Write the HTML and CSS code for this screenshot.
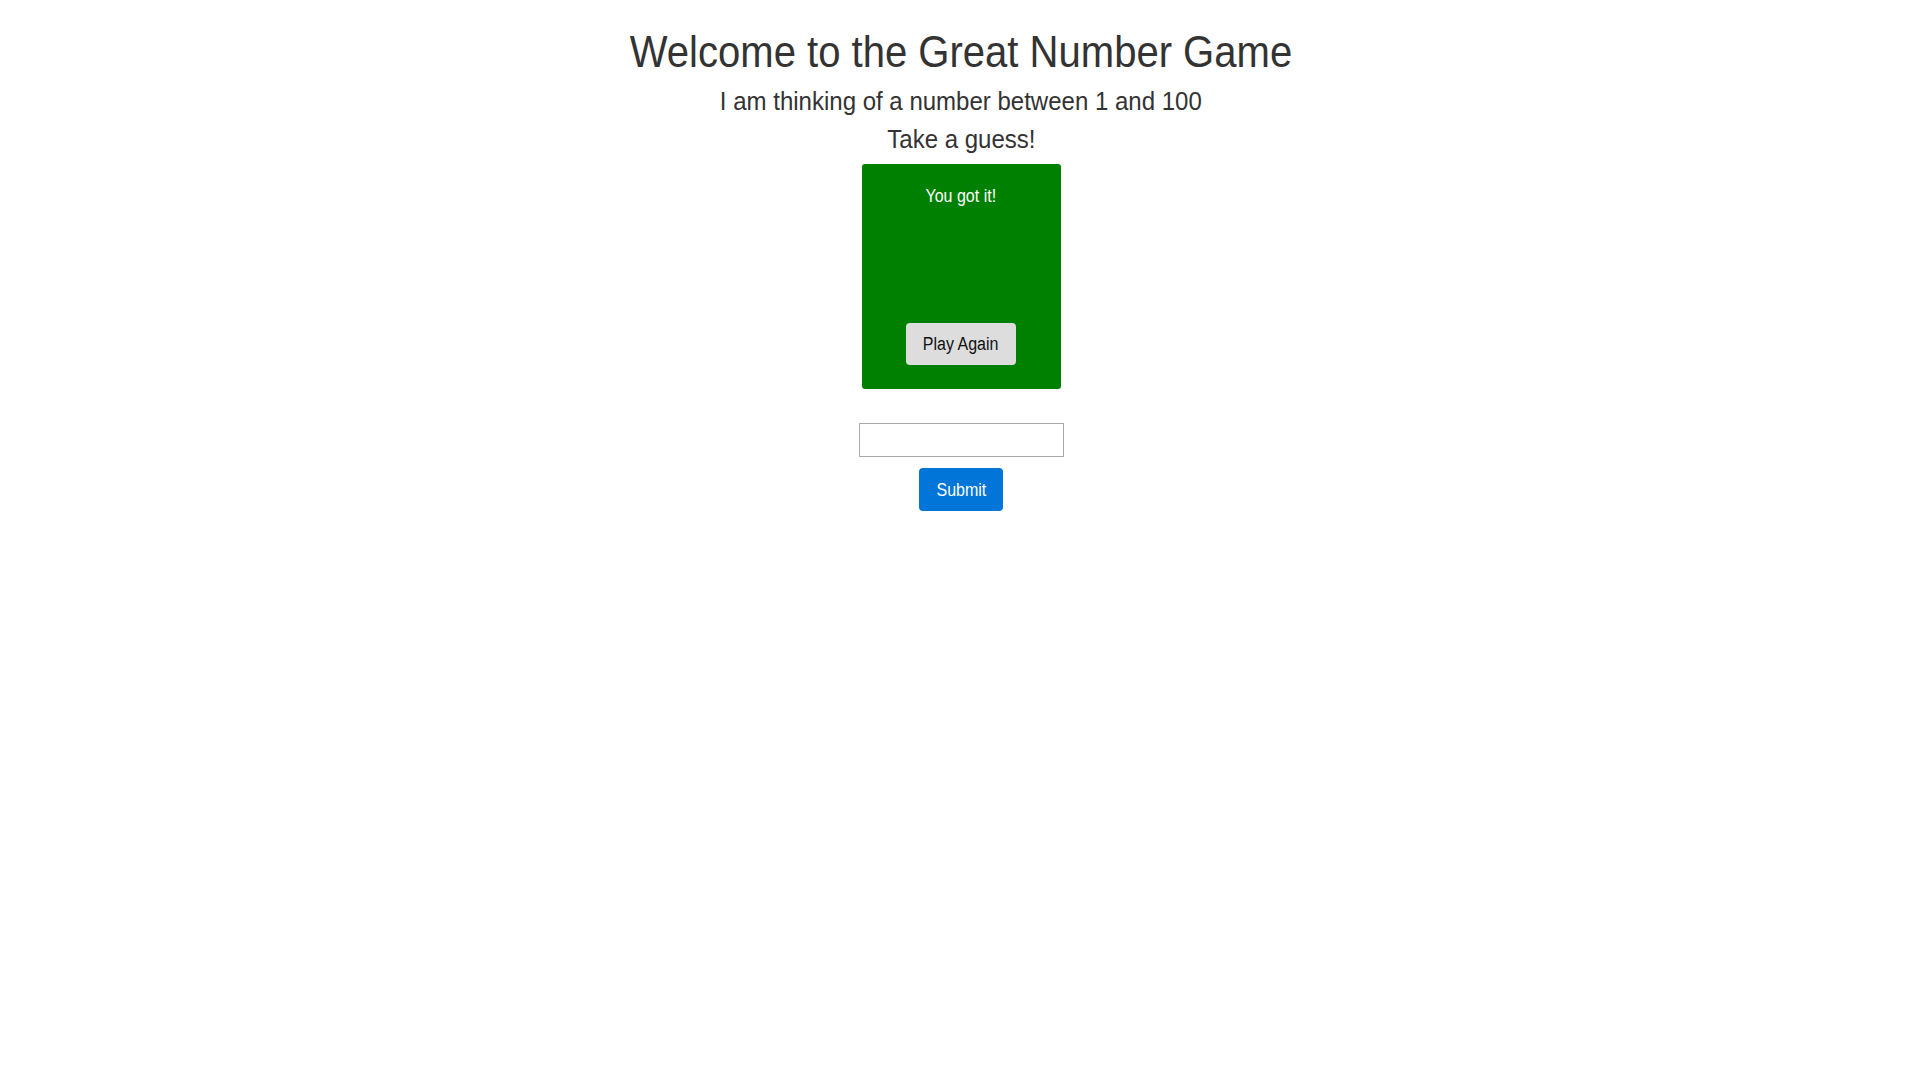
FILE: index.html
```html
<!DOCTYPE html>
<html lang="en">
<head>
<meta charset="utf-8">
<title>Great Number Game</title>
<link rel="stylesheet" href="styles.css">
</head>
<body>
<main class="page">
  <h1 class="title">Welcome to the Great Number Game</h1>
  <h3 class="subtitle">I am thinking of a number between 1 and 100</h3>
  <h3 class="subtitle subtitle-guess">Take a guess!</h3>
  <div class="result">
    <p class="result-text">You got it!</p>
    <button class="btn btn-again" type="button"><span class="btn-label">Play Again</span></button>
  </div>
  <form class="guess-form">
    <input class="guess-input" type="text" name="guess">
    <button class="btn btn-submit" type="submit"><span class="btn-label">Submit</span></button>
  </form>
</main>
</body>
</html>
```

FILE: styles.css
```css
html, body {
  margin: 0;
  padding: 0;
  background: #ffffff;
}

body {
  font-family: "Liberation Sans", Arial, Helvetica, sans-serif;
  color: #333333;
}

.page {
  display: flex;
  flex-direction: column;
  align-items: center;
  text-align: center;
  padding-left: 2px;
}

/* text in the reference is slightly condensed horizontally */
.title,
.subtitle,
.result-text,
.btn-label {
  transform: scaleX(0.91);
}

.title {
  margin: 28px 0 0;
  font-size: 44px;
  line-height: 48px;
  font-weight: 400;
}

.subtitle {
  margin: 11px 0 0;
  font-size: 26.4px;
  line-height: 28px;
  font-weight: 400;
}

.subtitle-guess {
  margin-top: 10px;
}

.result {
  margin-top: 11px;
  width: 199px;
  height: 225px;
  box-sizing: border-box;
  padding: 21px 0 24px;
  background: #008000;
  border-radius: 3px;
  display: flex;
  flex-direction: column;
  align-items: center;
  justify-content: space-between;
}

.result-text {
  margin: 0;
  color: #ffffff;
  font-size: 17.6px;
  line-height: 22px;
}

.btn {
  display: flex;
  align-items: center;
  justify-content: center;
  border: none;
  border-radius: 4px;
  padding: 0;
  font-family: inherit;
  font-size: 17.6px;
  line-height: 22px;
}

.btn-label {
  display: inline-block;
}

.btn-again {
  width: 110px;
  height: 42px;
  background: #dddddd;
  color: #111111;
}

.guess-form {
  margin-top: 34px;
  display: flex;
  flex-direction: column;
  align-items: center;
  gap: 11px;
}

.guess-input {
  width: 205px;
  height: 34px;
  box-sizing: border-box;
  border: 1px solid #aaaaaa;
  border-radius: 0;
  margin: 0;
  padding: 2px 6px;
  font-family: inherit;
  font-size: 16px;
}

.btn-submit {
  width: 84px;
  height: 43px;
  background: #0275d8;
  color: #ffffff;
}
```
